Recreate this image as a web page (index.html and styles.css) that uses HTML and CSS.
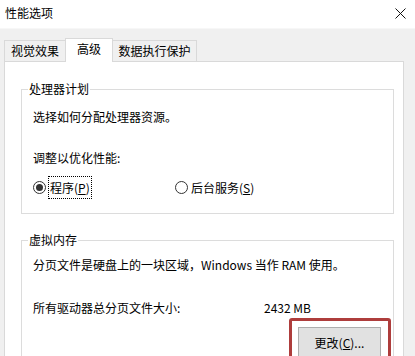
FILE: index.html
```html
<!DOCTYPE html>
<html lang="zh-CN">
<head>
  <meta charset="UTF-8" />
  <title>性能选项</title>
  <link rel="stylesheet" href="styles.css">
</head>
<body>
  <div class="dialog">
    <div class="titlebar">
      <span class="title">性能选项</span>
      <svg class="close" width="11" height="11" viewBox="0 0 11 11">
        <path d="M0.5 0.5 L10.5 10.5 M10.5 0.5 L0.5 10.5" stroke="#111" stroke-width="1" fill="none"/>
      </svg>
    </div>

    <div class="tabs">
      <div class="tab tab-visual">视觉效果</div>
      <div class="tab tab-adv active">高级</div>
      <div class="tab tab-dep">数据执行保护</div>
    </div>

    <div class="panel">
      <fieldset class="group group-cpu">
        <legend>处理器计划</legend>
        <p class="line first">选择如何分配处理器资源。</p>
        <p class="line adjust">调整以优化性能:</p>
        <div class="radios">
          <label class="radio checked"><span class="dot"></span><span class="focus">程序(<u>P</u>)</span></label>
          <label class="radio"><span class="dot"></span><span class="text">后台服务(<u>S</u>)</span></label>
        </div>
      </fieldset>

      <fieldset class="group group-mem">
        <legend>虚拟内存</legend>
        <p class="line first">分页文件是硬盘上的一块区域，Windows 当作 RAM 使用。</p>
        <div class="size-row">
          <span class="size-label">所有驱动器总分页文件大小:</span>
          <span class="size-value">2432 MB</span>
        </div>
        <div class="btn-row">
          <div class="highlight">
            <button class="btn">更改(<u>C</u>)...</button>
          </div>
        </div>
      </fieldset>
    </div>
  </div>
</body>
</html>
```

FILE: styles.css
```css
html, body { margin: 0; padding: 0; }
body { width: 415px; height: 356px; overflow: hidden; background: #f0f0f0; font-family: "Noto Sans CJK SC", "Noto Sans", sans-serif; font-size: 12px; color: #000; }

.titlebar { height: 29px; background: #fff; display: flex; align-items: center; justify-content: space-between; padding: 0 9px 2px 5px; box-sizing: border-box; border-bottom: 1px solid #f7f7f7; }
.title { line-height: 16px; }
.close { display: block; }

.tabs { height: 32px; display: flex; align-items: flex-end; padding-left: 4px; }
.tab { height: 21px; box-sizing: border-box; border: 1px solid #d9d9d9; border-bottom: none; background: #f0f0f0; line-height: 19px; text-align: center; }
.tab-visual { width: 61px; border-right: none; }
.tab-adv { width: 48px; }
.tab-dep { width: 84px; border-left: none; }
.tab.active { height: 24px; background: #fff; margin-bottom: -1px; position: relative; z-index: 1; line-height: 20px; }

.panel { width: 400px; height: 295px; margin-left: 4px; box-sizing: border-box; background: #fff; border: 1px solid #d9d9d9; border-bottom: none; padding: 20px 9px 0 16px; overflow: hidden; }

.group { margin: 0; padding: 0 0 0 11px; border: 1px solid #dcdcdc; min-width: 0; }
.group legend { margin-left: -5px; padding: 0 1px; line-height: 14px; }
.group-cpu { padding-bottom: 15px; }
.group-mem { margin-top: 19px; padding-bottom: 20px; }

.line { margin: 0; line-height: 16px; }
.group-cpu .first { margin-top: 13px; }
.adjust { margin-top: 25px; }
.group-mem .first { margin-top: 10px; }

.radios { display: flex; margin-top: 10px; height: 22px; align-items: center; }
.radio { display: flex; align-items: center; }
.radio:first-child { width: 142px; }
.dot { width: 13px; height: 13px; box-sizing: border-box; border: 1px solid #333; border-radius: 50%; background: #fff; position: relative; margin-right: 3px; }
.radio.checked .dot::after { content: ""; position: absolute; left: 2px; top: 2px; width: 7px; height: 7px; border-radius: 50%; background: #333; }
.focus { outline: 1px dotted #000; outline-offset: 0; padding: 3px 1px; line-height: 15px; }
.text { line-height: 15px; }

.size-row { display: flex; margin-top: 27px; line-height: 16px; }
.size-label { width: 231px; }

.btn-row { display: flex; justify-content: flex-end; margin-top: 2px; margin-right: 2px; }
.highlight { border: 3px solid #ae3d3c; border-radius: 3px; padding: 6px 7px 6px 6px; }
.btn { display: block; width: 83px; height: 30px; background: #e1e1e1; border: 1px solid #adadad; font-family: inherit; font-size: 12px; color: #000; padding: 0; }
```
